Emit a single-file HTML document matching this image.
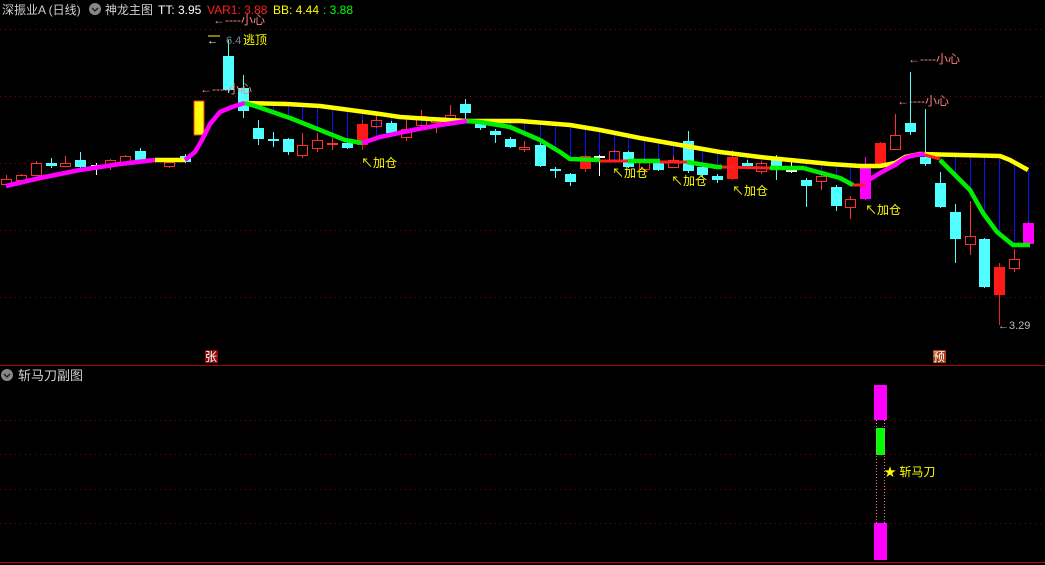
<!DOCTYPE html>
<html><head><meta charset="utf-8"><style>
html,body{margin:0;padding:0;background:#000;width:1045px;height:565px;overflow:hidden}
svg{display:block}
text{font-family:"Liberation Sans","Noto Sans CJK SC",sans-serif}
</style></head><body>
<svg id="s" width="1045" height="565" xmlns="http://www.w3.org/2000/svg">
<g stroke="#8a0000" stroke-width="1" stroke-dasharray="1,4">
<line x1="0" y1="29.5" x2="1045" y2="29.5"/><line x1="0" y1="96.5" x2="1045" y2="96.5"/>
<line x1="0" y1="163.5" x2="1045" y2="163.5"/><line x1="0" y1="230.5" x2="1045" y2="230.5"/>
<line x1="0" y1="297.5" x2="1045" y2="297.5"/>
<line x1="0" y1="420.5" x2="1045" y2="420.5"/><line x1="0" y1="454.5" x2="1045" y2="454.5"/>
<line x1="0" y1="489.5" x2="1045" y2="489.5"/><line x1="0" y1="523.5" x2="1045" y2="523.5"/>
</g>
<line x1="0" y1="365.5" x2="1045" y2="365.5" stroke="#b00000"/>
<line x1="0" y1="562.5" x2="1045" y2="562.5" stroke="#c00000"/>
<g id="blue"></g>
<g id="cand"></g>
<g id="lines" fill="none" stroke-width="4.5" stroke-linejoin="round"></g>
</svg>
<script>
var NS="http://www.w3.org/2000/svg",S=document.getElementById('s');
function el(p,t,a,txt){var e=document.createElementNS(NS,t);for(var k in a)e.setAttribute(k,a[k]);if(txt)e.textContent=txt;p.appendChild(e);return e;}
var C=[[6,179,184,175,186,'u'],[21,175,180,174,181,'u'],[36,163,175,161,176,'u'],[51,163,166,158,168,'d'],[65,163,166,156,167,'u'],[80,160,167,152,168,'d'],[96,165,166,163,175,'w'],[110,160,165,159,170,'u'],[125,156,162,155,163,'u'],[140,151,160,148,161,'d'],[169,162,166,160,168,'u'],[185,156,162,154,163,'d'],
[228,56,90,40,93,'d'],[243,88,111,75,118,'d'],[258,128,139,120,145,'d'],[273,139,140,132,147,'x'],[288,139,152,138,155,'d'],[302,145,155,133,158,'u'],[317,140,148,133,152,'u'],[332,143,145,138,150,'z'],[347,143,148,142,149,'d'],[362,124,145,120,150,'r'],[376,120,126,113,128,'u'],[391,123,133,121,135,'d'],[406,129,137,120,141,'u'],[421,116,125,110,127,'u'],[436,120,122,117,133,'u'],[450,115,122,105,124,'u'],[465,104,113,99,120,'d'],[480,123,128,120,130,'d'],[495,131,135,129,143,'d'],[510,139,147,137,148,'d'],[524,147,149,141,152,'u'],[540,145,166,143,167,'d'],[555,169,171,167,178,'d'],[570,174,182,173,186,'d'],[585,156,169,155,172,'r'],[599,156,157,155,176,'w'],[614,151,161,150,162,'u'],[628,152,167,151,168,'d'],[644,162,169,158,171,'u'],[658,163,170,160,171,'d'],[673,160,167,156,168,'u'],[688,141,171,131,173,'d'],[702,167,175,165,177,'d'],[717,176,180,174,183,'d'],[732,157,179,150,180,'r'],[747,163,166,160,168,'d'],[761,163,171,161,174,'u'],[776,159,169,155,180,'d'],[791,170,171,158,173,'w'],[806,180,186,178,207,'d'],[821,176,181,174,190,'u'],[836,187,206,185,211,'d'],[850,199,207,196,219,'u'],[865,167,199,157,200,'m'],[880,143,167,142,168,'r'],[895,135,149,114,150,'u'],[910,123,132,72,135,'d'],[925,157,164,109,166,'d'],[940,183,207,172,208,'d'],[955,212,239,204,263,'d'],[970,236,244,201,255,'u'],[984,239,287,238,288,'d'],[999,267,295,263,325,'r'],[1014,259,268,249,272,'u'],[1028,223,244,222,245,'m']];
var G=document.getElementById('cand');
C.forEach(function(c){var x=c[0],t=c[1],b=c[2],h=c[3],l=c[4],k=c[5];
var col={u:'#ff3030',d:'#50ffff',r:'#ff1a1a',m:'#ff00ff',w:'#ffffff',x:'#50ffff',z:'#ff3030'}[k];
if(k=='u'){el(G,'line',{x1:x+.5,y1:h,x2:x+.5,y2:t,stroke:col});el(G,'line',{x1:x+.5,y1:b,x2:x+.5,y2:l,stroke:col});el(G,'rect',{x:x-4.5,y:t+.5,width:10,height:Math.max(b-t,1),fill:'none',stroke:col});}
else if(k=='w'||k=='x'||k=='z'){el(G,'line',{x1:x+.5,y1:h,x2:x+.5,y2:l,stroke:col});el(G,'rect',{x:x-5,y:t,width:11,height:2,fill:col});}
else{el(G,'line',{x1:x+.5,y1:h,x2:x+.5,y2:l,stroke:col});el(G,'rect',{x:x-5,y:t,width:11,height:Math.max(b-t,2),fill:col});}
});
el(G,'rect',{x:194,y:101,width:10,height:34,fill:'#ffff00',stroke:'#ff3030','stroke-width':1});
var L=document.getElementById('lines');
function pl(pts,col,w){el(L,'polyline',{points:pts.map(function(p){return p.join(',')}).join(' '),stroke:col,'stroke-width':w||4.5});}
var Y=[[245,103],[287,104],[320,106],[350,110],[380,114],[400,117],[430,119],[467,121],[520,121],[570,125],[600,130],[640,138],[680,145],[720,152],[760,157],[800,161],[830,164],[860,166],[880,166],[895,163],[905,157],[920,154],[1000,156],[1010,160],[1028,170]];
var LO=[[245,103],[258,107],[290,118],[320,130],[345,140],[362,143],[380,137],[413,130],[440,125],[467,121],[480,122],[510,127],[540,140],[560,152],[570,159],[600,160],[640,161],[687,162],[717,167],[740,167],[777,168],[803,168],[840,178],[853,185],[868,185],[880,173],[895,165],[905,158],[915,155],[925,154],[940,158],[970,190],[983,213],[997,232],[1013,245],[1030,245]];
function yAt(arr,x){for(var i=0;i<arr.length-1;i++){if(x>=arr[i][0]&&x<=arr[i+1][0]){var a=arr[i],b=arr[i+1];return a[1]+(b[1]-a[1])*(x-a[0])/(b[0]-a[0]);}}return null;}
var B=document.getElementById('blue');
C.forEach(function(c){var x=c[0];if((x>=250&&x<=860)||(x>=935)){var a=yAt(Y,x),b=yAt(LO,x);if(a!=null&&b!=null&&b-a>3)el(B,'line',{x1:x+.5,y1:a,x2:x+.5,y2:b,stroke:'#1010ff','stroke-width':1});}});
pl([[6,186],[40,178],[80,170],[120,164],[155,160]],'#ff00ff');
pl([[155,160],[185,160]],'#ffff00');
pl([[185,160],[195,152],[202,140],[210,124],[220,112],[232,107],[245,103]],'#ff00ff');
pl(Y,'#ffff00');
pl([[245,103],[258,107],[290,118],[320,130],[345,140],[362,143]],'#00ee00');
pl([[362,143],[380,137],[413,130],[440,125],[467,121]],'#ff00ff');
pl([[467,121],[480,122],[510,127],[540,140],[560,152],[570,159],[600,160]],'#00ee00');
pl([[600,161],[628,161]],'#ff2020',3);
pl([[628,161],[660,161]],'#00ee00');
pl([[660,162],[687,162]],'#ff2020',3);
pl([[687,162],[717,167],[722,167]],'#00ee00');
pl([[722,167],[770,168]],'#ff2020',3);
pl([[770,168],[803,168],[840,178],[853,185]],'#00ee00');
pl([[853,185],[866,185]],'#ff2020',3);
pl([[864,183],[880,173],[895,165],[905,158],[915,155],[925,154]],'#ff00ff');
pl([[925,155],[940,159]],'#ff2020',3);
pl([[940,160],[970,190],[983,213],[997,232],[1013,245],[1030,245]],'#00ee00');
el(S,'rect',{x:874,y:385,width:13,height:35,fill:'#ff00ff'});
el(S,'rect',{x:876,y:428,width:9,height:27,fill:'#00ff00'});
el(S,'rect',{x:874,y:523,width:13,height:37,fill:'#ff00ff'});
el(S,'line',{x1:876.5,y1:420,x2:876.5,y2:523,stroke:'#ff8080','stroke-dasharray':'1,2'});
el(S,'line',{x1:884.5,y1:420,x2:884.5,y2:523,stroke:'#ff8080','stroke-dasharray':'1,2'});
function tx(x,y,s,col,fs){return el(S,'text',{x:x,y:y,fill:col,'font-size':fs||12},s);}
tx(2,14,'深振业A (日线)','#d0d0d0',12);
el(S,'circle',{cx:95,cy:9,r:6,fill:'#888'});el(S,'path',{d:'M92 8l3 3 3-3',stroke:'#222',fill:'none','stroke-width':1.5});
tx(105,14,'神龙主图','#d0d0d0',12);
tx(158,14,'TT: 3.95','#ffffff',12);tx(207,14,'VAR1: 3.88','#ff2020',12);tx(273,14,'BB: 4.44','#ffff00',12);tx(323,14,': 3.88','#00ff00',12);
tx(213,24,'←----小心','#ff8080',12);
tx(207,44,'←','#ffffff',11);tx(226,44,'6.4','#888888',11);tx(243,44,'逃顶','#ffff00',12);
el(S,'line',{x1:208,y1:36,x2:220,y2:36,stroke:'#ffff00'});
tx(200,93,'←----小心','#ff8080',12);
tx(908,63,'←----小心','#ff8080',12);
tx(897,105,'←----小心','#ff8080',12);
tx(998,329,'←3.29','#bbbbbb',11);
[[361,167],[612,177],[671,185],[732,195],[865,214]].forEach(function(p){tx(p[0],p[1],'↖加仓','#ffff00',12);});
el(S,'rect',{x:205,y:350,width:13,height:13,fill:'#8b0a0a'});tx(205,361,'张','#ffffff',12);
el(S,'rect',{x:933,y:350,width:13,height:13,fill:'#a83a10'});tx(933,361,'预','#ffffff',12);
el(S,'circle',{cx:7,cy:375,r:6,fill:'#888'});el(S,'path',{d:'M4 374l3 3 3-3',stroke:'#222',fill:'none','stroke-width':1.5});
tx(18,380,'斩马刀副图','#d0d0d0',13);
tx(884,476,'★ 斩马刀','#ffff00',12);
</script>
</body></html>
